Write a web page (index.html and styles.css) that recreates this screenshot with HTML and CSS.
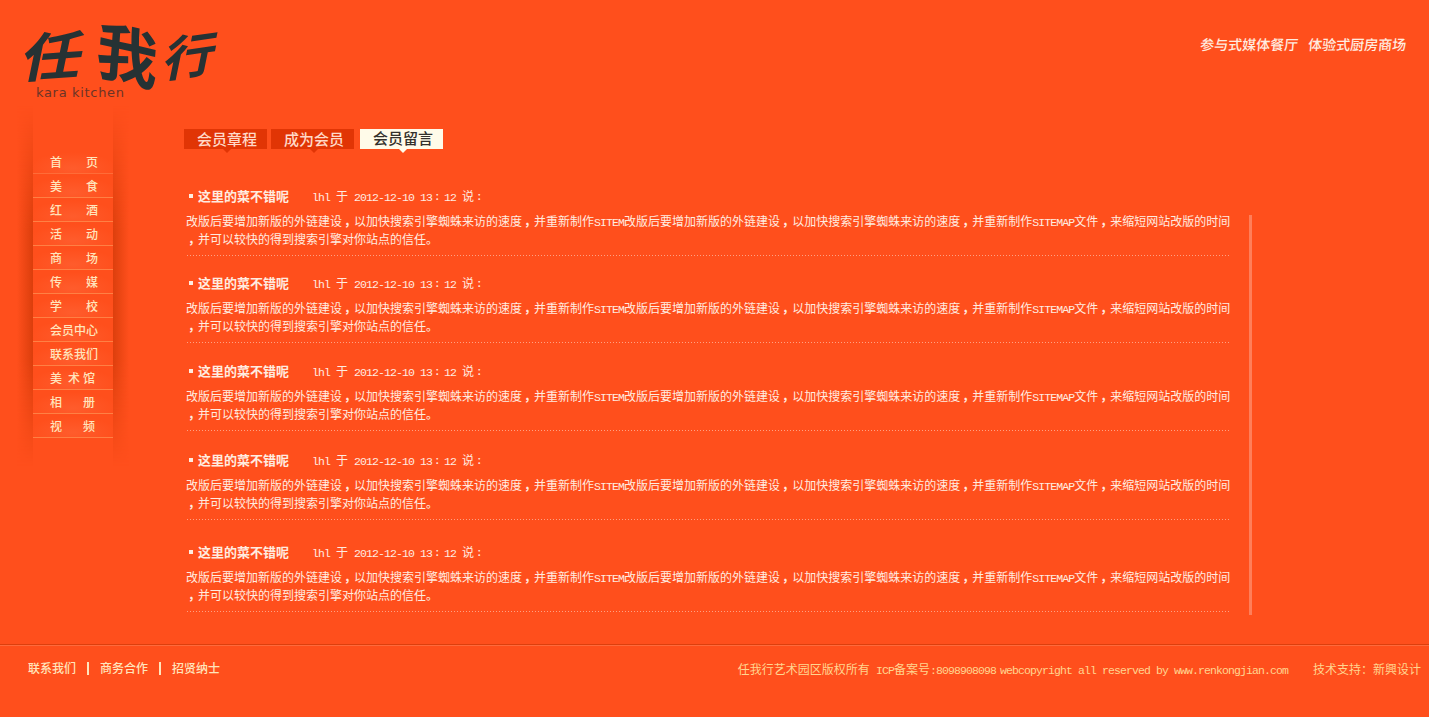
FILE: index.html
```html
<!DOCTYPE html>
<html lang="zh-CN">
<head>
<meta charset="utf-8">
<title>任我行 kara kitchen</title>
<link rel="stylesheet" href="styles.css">
</head>
<body>
<div class="page">
  <header class="header">
    <svg class="logo" width="240" height="106" viewBox="0 0 240 106" role="img" aria-label="任我行 kara kitchen">
      <g class="logo-brush">
        <text transform="matrix(1.13 -.08 -.2 .98 19 78)" font-size="54">任</text>
        <text transform="matrix(1.05 .24 -.08 1.08 95 72)" font-size="58">我</text>
        <text transform="matrix(1.04 -.15 -.2 .98 161 78)" font-size="50">行</text>
      </g>
      <text class="logo-sub" x="36" y="97" textLength="88">kara kitchen</text>
    </svg>
    <p class="slogan"><span>参与式媒体餐厅</span><span>体验式厨房商场</span></p>
  </header>

  <div class="main">
    <nav class="sidebar">
      <ul class="menu">
        <li><span>首</span><span>页</span></li>
        <li><span>美</span><span>食</span></li>
        <li><span>红</span><span>酒</span></li>
        <li><span>活</span><span>动</span></li>
        <li><span>商</span><span>场</span></li>
        <li><span>传</span><span>媒</span></li>
        <li><span>学</span><span>校</span></li>
        <li class="full">会员中心</li>
        <li class="full">联系我们</li>
        <li class="near trio"><span>美</span><span>术</span><span>馆</span></li>
        <li class="near"><span>相</span><span>册</span></li>
        <li class="near"><span>视</span><span>频</span></li>
      </ul>
    </nav>

    <section class="content">
      <div class="tabs">
        <a class="tab">会员章程</a>
        <a class="tab">成为会员</a>
        <a class="tab active">会员留言</a>
      </div>
      <div class="board">
        <div class="messages">
          <article class="message">
            <h3><i class="dot"></i><b>这里的菜不错呢</b><span class="meta"><span class="lat">lhl </span>于<span class="lat"> 2012-12-10 13</span><span class="colon">：</span><span class="lat">12 </span>说<span class="colon">：</span></span></h3>
            <p>改版后要增加新版的外链建设<span class="comma">，</span>以加快搜索引擎蜘蛛来访的速度<span class="comma">，</span>并重新制作<span class="lat">SITEM</span>改版后要增加新版的外链建设<span class="comma">，</span>以加快搜索引擎蜘蛛来访的速度<span class="comma">，</span>并重新制作<span class="lat">SITEMAP</span>文件<span class="comma">，</span>来缩短网站改版的时间<br><span class="comma">，</span>并可以较快的得到搜索引擎对你站点的信任。</p>
          </article>
          <article class="message">
            <h3><i class="dot"></i><b>这里的菜不错呢</b><span class="meta"><span class="lat">lhl </span>于<span class="lat"> 2012-12-10 13</span><span class="colon">：</span><span class="lat">12 </span>说<span class="colon">：</span></span></h3>
            <p>改版后要增加新版的外链建设<span class="comma">，</span>以加快搜索引擎蜘蛛来访的速度<span class="comma">，</span>并重新制作<span class="lat">SITEM</span>改版后要增加新版的外链建设<span class="comma">，</span>以加快搜索引擎蜘蛛来访的速度<span class="comma">，</span>并重新制作<span class="lat">SITEMAP</span>文件<span class="comma">，</span>来缩短网站改版的时间<br><span class="comma">，</span>并可以较快的得到搜索引擎对你站点的信任。</p>
          </article>
          <article class="message">
            <h3><i class="dot"></i><b>这里的菜不错呢</b><span class="meta"><span class="lat">lhl </span>于<span class="lat"> 2012-12-10 13</span><span class="colon">：</span><span class="lat">12 </span>说<span class="colon">：</span></span></h3>
            <p>改版后要增加新版的外链建设<span class="comma">，</span>以加快搜索引擎蜘蛛来访的速度<span class="comma">，</span>并重新制作<span class="lat">SITEM</span>改版后要增加新版的外链建设<span class="comma">，</span>以加快搜索引擎蜘蛛来访的速度<span class="comma">，</span>并重新制作<span class="lat">SITEMAP</span>文件<span class="comma">，</span>来缩短网站改版的时间<br><span class="comma">，</span>并可以较快的得到搜索引擎对你站点的信任。</p>
          </article>
          <article class="message">
            <h3><i class="dot"></i><b>这里的菜不错呢</b><span class="meta"><span class="lat">lhl </span>于<span class="lat"> 2012-12-10 13</span><span class="colon">：</span><span class="lat">12 </span>说<span class="colon">：</span></span></h3>
            <p>改版后要增加新版的外链建设<span class="comma">，</span>以加快搜索引擎蜘蛛来访的速度<span class="comma">，</span>并重新制作<span class="lat">SITEM</span>改版后要增加新版的外链建设<span class="comma">，</span>以加快搜索引擎蜘蛛来访的速度<span class="comma">，</span>并重新制作<span class="lat">SITEMAP</span>文件<span class="comma">，</span>来缩短网站改版的时间<br><span class="comma">，</span>并可以较快的得到搜索引擎对你站点的信任。</p>
          </article>
          <article class="message">
            <h3><i class="dot"></i><b>这里的菜不错呢</b><span class="meta"><span class="lat">lhl </span>于<span class="lat"> 2012-12-10 13</span><span class="colon">：</span><span class="lat">12 </span>说<span class="colon">：</span></span></h3>
            <p>改版后要增加新版的外链建设<span class="comma">，</span>以加快搜索引擎蜘蛛来访的速度<span class="comma">，</span>并重新制作<span class="lat">SITEM</span>改版后要增加新版的外链建设<span class="comma">，</span>以加快搜索引擎蜘蛛来访的速度<span class="comma">，</span>并重新制作<span class="lat">SITEMAP</span>文件<span class="comma">，</span>来缩短网站改版的时间<br><span class="comma">，</span>并可以较快的得到搜索引擎对你站点的信任。</p>
          </article>
        </div>
        <div class="scrollbar"></div>
      </div>
    </section>
  </div>

  <footer class="footer">
    <div class="links"><a>联系我们</a><i></i><a>商务合作</a><i></i><a>招贤纳士</a></div>
    <div class="legal">
      <span>任我行艺术园区版权所有<span class="lat"> ICP</span>备案号<span class="lat">:8098908098</span></span>
      <span class="copy"><span class="lat">webcopyright all reserved by www.renkongjian.com</span></span>
      <span class="support">技术支持：新興设计</span>
    </div>
  </footer>
</div>
</body>
</html>
```

FILE: styles.css
```css
* { box-sizing: border-box; }

body {
  margin: 0;
  background: #ff4f1c;
  color: #ffece0;
  font: 12px/18px "Noto Sans CJK SC", sans-serif;
}

h3, p, ul { margin: 0; padding: 0; }
i { font-style: normal; }

.page {
  display: flex;
  flex-direction: column;
  height: 717px;
  overflow: hidden;
}

.lat {
  font-family: "Liberation Mono", monospace;
  font-size: 11.5px;
  letter-spacing: -.9px;
  line-height: 0;
  white-space: pre;
}
/* these two keep the full 12px advance while the mark sits nearer the cell's centre */
.colon {
  padding-left: 3px;
  font-size: 9px;
  font-weight: 700;
  line-height: 0;
  vertical-align: 1px;
}
.comma {
  margin: 0 -2px 0 2px;
  font-weight: 700;
}

/* header */
.header {
  display: flex;
  justify-content: space-between;
  height: 106px;
}
.logo {
  display: block;
  overflow: visible;
}
.logo-brush {
  fill: #263234;
  font-family: "Noto Sans CJK SC", sans-serif;
  font-weight: 700;
}
.logo-sub {
  fill: #6b3427;
  font: 13px "DejaVu Sans", sans-serif;
}
.slogan {
  display: flex;
  gap: 10px;
  padding: 34px 20px 0 0;
  font-size: 14px;
  font-style: italic;
  font-weight: 500;
  line-height: 20px;
}
.slogan span { transform: skewX(9deg); }

/* body */
.main {
  display: flex;
  height: 538px;
}
.sidebar {
  display: flex;
  width: 184px;
  height: 360px;
  padding-left: 17px;
}
.sidebar::before,
.sidebar::after {
  content: "";
  width: 16px;
  -webkit-mask-image: linear-gradient(transparent, #000 35%, #000 70%, transparent);
  mask-image: linear-gradient(transparent, #000 35%, #000 70%, transparent);
}
.sidebar::before { background: linear-gradient(to left, #db3e0c, #ff4f1c); }
.sidebar::after { background: linear-gradient(to right, #dc3f0d, #ff4f1c); }
.menu {
  width: 80px;
  padding-top: 44px;
  list-style: none;
}
.menu li {
  display: flex;
  justify-content: space-between;
  height: 24px;
  padding: 0 15px 0 17px;
  border-bottom: 1px solid #ff8044;
  background: radial-gradient(ellipse 44px 16px at 50% 80%, #ff5c2c, #ff4f1c);
  color: #ffe5bd;
  font-size: 12px;
  font-weight: 500;
  line-height: 23px;
  white-space: nowrap;
}
.menu li:first-child { border-bottom-color: #ff6c38; }
.menu .full { padding-right: 0; }
.menu .near { padding-right: 18px; }
.menu .trio {
  justify-content: flex-start;
  gap: 3px;
}
.menu .trio span:first-child { margin-right: 3px; }

.content { padding-top: 23px; }
.tabs {
  display: flex;
  gap: 4px;
  height: 55px;
}
.tab {
  position: relative;
  width: 83px;
  height: 20px;
  padding-left: 13px;
  background: #e13505;
  color: #ffd9c9;
  font-size: 15px;
  font-weight: 500;
  line-height: 19px;
}
.tab::after {
  content: "";
  position: absolute;
  left: 39px;
  top: 20px;
  border: solid transparent;
  border-width: 4px 4px 0;
  border-top-color: #e13505;
}
.tab.active {
  margin-left: 2px;
  background: #fffbe9;
  color: #33302b;
  line-height: 18px;
}
.tab.active::after { border-top-color: #fffbe9; }

.board { display: flex; }
.messages {
  width: 1065px;
  padding-left: 2px;
}
.message {
  height: 72px;
  margin-bottom: 15px;
  width: 1044px;
  background: repeating-linear-gradient(to right, #ffa183 0 1px, transparent 1px 3px) 1px 100% / 100% 1px no-repeat;
}
.message:nth-child(2) { margin-bottom: 16px; }
.message:nth-child(3) { margin-bottom: 17px; }
.message:nth-child(4) { margin-bottom: 20px; }
.message h3 {
  display: flex;
  align-items: center;
  height: 24px;
  padding-left: 3px;
  font-size: 12px;
  font-weight: 400;
  white-space: nowrap;
}
.message b {
  width: 114px;
  margin-left: 5px;
  font-size: 13px;
}
.dot {
  width: 4px;
  height: 4px;
  background: #ffece0;
}
.message p {
  padding-top: 4px;
  white-space: nowrap;
}
.scrollbar {
  width: 3px;
  height: 400px;
  margin-top: 31px;
  background: #ff7e59;
}

/* footer */
.footer {
  display: flex;
  justify-content: space-between;
  height: 73px;
  padding: 14px 8px 0 28px;
  border-top: 1px solid #dc3f0d;
  box-shadow: inset 0 1px #ff6a3c;
  color: #ffd590;
}
.links {
  display: flex;
  align-items: flex-start;
  font-weight: 500;
  color: #ffe5bd;
}
.links i {
  width: 2px;
  height: 13px;
  margin: 3px 11px 0;
  background: #ffe5bd;
}
.legal {
  display: flex;
  padding-top: 1px;
}
.copy { margin: 0 25px 0 4px; }
```
